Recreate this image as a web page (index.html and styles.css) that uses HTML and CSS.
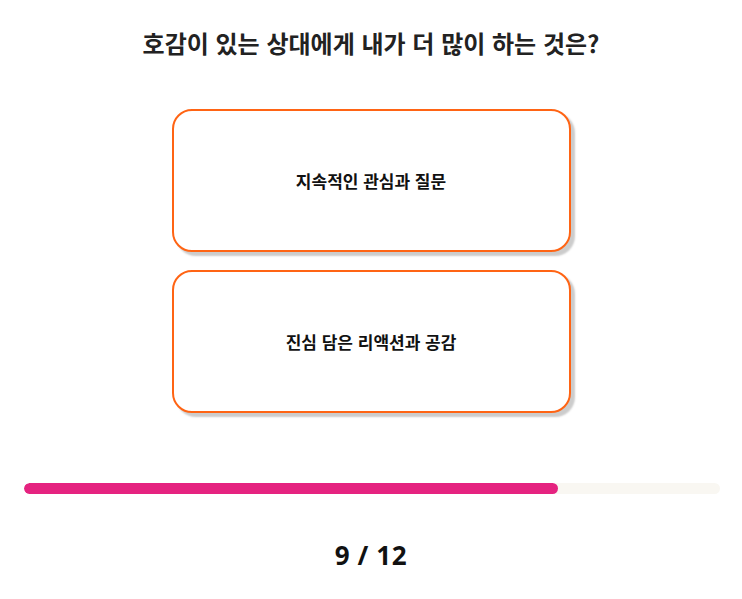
FILE: index.html
```html
<!DOCTYPE html>
<html lang="ko">
<head>
<meta charset="utf-8">
<link rel="stylesheet" href="styles.css">
</head>
<body>
<div class="page">
  <h1 class="question">호감이 있는 상대에게 내가 더 많이 하는 것은?</h1>
  <div class="options">
    <button class="option">지속적인 관심과 질문</button>
    <button class="option">진심 담은 리액션과 공감</button>
  </div>
  <div class="progress"><div class="progress-fill" style="width:76.7%"></div></div>
  <div class="counter">9 / 12</div>
</div>
</body>
</html>
```
FILE: styles.css
```css
html, body {
  margin: 0;
  padding: 0;
  background: #ffffff;
}
body {
  font-family: "Noto Sans CJK KR", "Noto Sans", sans-serif;
  color: #222222;
}
.page {
  display: flex;
  flex-direction: column;
  align-items: center;
  padding-top: 26px;
}
.question {
  margin: 0;
  font-size: 24px;
  font-weight: 700;
  line-height: 34px;
  color: #222222;
}
.options {
  display: flex;
  flex-direction: column;
  gap: 18px;
  margin-top: 49px;
}
.option {
  width: 399px;
  height: 143px;
  box-sizing: border-box;
  border: 2px solid #ff6414;
  border-radius: 20px;
  background: #ffffff;
  box-shadow: 4px 4px 2px #cccccc;
  font-family: "Noto Sans CJK KR", "Noto Sans", sans-serif;
  font-size: 17px;
  font-weight: 700;
  color: #111111;
  padding: 0;
}
.progress {
  align-self: stretch;
  margin: 70px 22px 0 24px;
  height: 11px;
  border-radius: 6px;
  background: #f9f7f2;
  overflow: hidden;
}
.progress-fill {
  height: 100%;
  border-radius: 6px;
  background: #e52380;
}
.counter {
  margin-top: 45px;
  font-family: "Noto Sans", sans-serif;
  font-size: 26px;
  font-weight: 700;
  letter-spacing: 0.6px;
  color: #111111;
  line-height: 32px;
}
```
